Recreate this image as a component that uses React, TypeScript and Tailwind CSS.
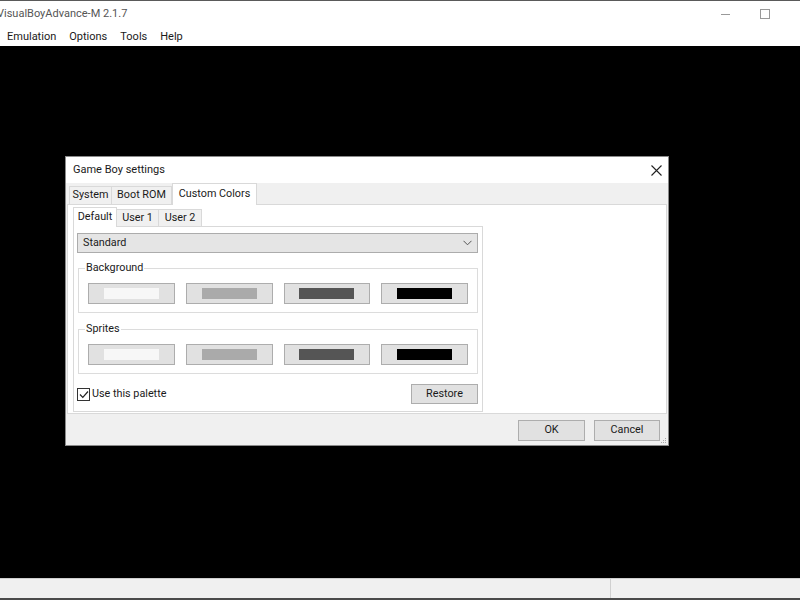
import React from "react";

const font = { fontFamily: 'Roboto, "Noto Sans", sans-serif' };

function ColorButton({ color }: { color: string }) {
  return (
    <div className="h-[21px] bg-[#e1e1e1] border border-[#adadad] flex items-center justify-center">
      <div className="w-[55px] h-[11px]" style={{ backgroundColor: color }} />
    </div>
  );
}

function Group({ label, colors }: { label: string; colors: string[] }) {
  return (
    <div className="relative border border-[#dcdcdc] h-[45px] ml-[1px] pt-[14px] px-[9px]">
      <span className="absolute -top-[9px] left-[6px] bg-white px-[1px] text-[10.8px] leading-[16px] text-[#1a1a1a]">
        {label}
      </span>
      <div className="grid grid-cols-4 gap-x-[11px]">
        {colors.map((c, i) => (
          <ColorButton key={i} color={c} />
        ))}
      </div>
    </div>
  );
}

export default function App() {
  const colors = ["#f7f7f7", "#aaaaaa", "#555555", "#000000"];
  return (
    <div className="w-[800px] h-[600px] flex flex-col bg-black overflow-hidden text-[10.8px] text-[#1a1a1a]" style={font}>
      {/* top strip */}
      <div className="h-[1px] bg-[#5a5a5a] shrink-0" />
      {/* title bar */}
      <div className="h-[25px] bg-white flex items-center shrink-0 relative pt-[2px]">
        <span className="-ml-[3px] text-[11px] text-[#555]">VisualBoyAdvance-M 2.1.7</span>
        <div className="ml-auto flex items-center h-full mr-[30px]">
          <div className="w-[9px] h-[1px] bg-[#999]" />
          <div className="w-[10px] h-[10px] border border-[#999] ml-[30px] -mt-[2px]" />
        </div>
      </div>
      {/* menu bar */}
      <div className="h-[20px] bg-white flex items-center shrink-0 pl-[7px] gap-[13px] text-[11px] text-[#1a1a1a] pt-[3px]">
        <span>Emulation</span>
        <span>Options</span>
        <span>Tools</span>
        <span>Help</span>
      </div>
      {/* black area */}
      <div className="flex-1 bg-black pt-[110px] pl-[65px]">
        <div className="w-[604px] h-[290px] bg-[#f0f0f0] border border-[#8a8a8a] flex flex-col">
          {/* dialog title */}
          <div className="h-[26px] bg-white flex items-center pl-[7px] shrink-0 pt-[1px]">
            <span className="text-[11px]">Game Boy settings</span>
            <span className="ml-auto mr-[6px] w-[12px] h-[12px] flex items-center justify-center">
              <svg width="11" height="11" viewBox="0 0 11 11">
                <path d="M0.5 0.5 L10.5 10.5 M10.5 0.5 L0.5 10.5" stroke="#222" strokeWidth="1.1" />
              </svg>
            </span>
          </div>
          {/* tabs */}
          <div className="h-[21px] flex items-end pl-[3px] shrink-0 relative z-10">
            <div className="w-[43px] h-[18px] border border-b-0 border-[#d9d9d9] flex items-center justify-center">System</div>
            <div className="w-[60px] h-[18px] border border-b-0 border-l-0 border-[#d9d9d9] flex items-center justify-center">Boot ROM</div>
            <div className="w-[85px] h-[22px] -mb-[1px] border border-b-0 border-[#d9d9d9] bg-white flex items-start pt-[2px] justify-center">Custom Colors</div>
          </div>
          {/* panel */}
          <div className="mx-[1px] h-[210px] bg-white border border-[#d9d9d9] pt-[1px] pl-[5px] shrink-0">
            <div className="h-[20px] flex items-end relative z-10">
              <div className="w-[44px] h-[20px] -mb-[1px] border border-b-0 border-[#d9d9d9] bg-white flex items-start pt-[1px] justify-center">Default</div>
              <div className="w-[42px] h-[17px] border border-b-0 border-l-0 border-[#d9d9d9] bg-[#f0f0f0] flex items-center justify-center">User 1</div>
              <div className="w-[43px] h-[17px] border border-b-0 border-l-0 border-[#d9d9d9] bg-[#f0f0f0] flex items-center justify-center">User 2</div>
            </div>
            <div className="w-[410px] h-[186px] border border-[#d9d9d9] bg-white pt-[6px] pl-[3px] pr-[4px]">
              <div className="h-[20px] bg-[#e5e5e5] border border-[#acacac] flex items-center pl-[5px] pr-[5px]">
                <span>Standard</span>
                <svg className="ml-auto" width="9" height="6" viewBox="0 0 9 6">
                  <path d="M0.5 0.8 L4.5 4.8 L8.5 0.8" stroke="#555" strokeWidth="1" fill="none" />
                </svg>
              </div>
              <div className="mt-[15px]">
                <Group label="Background" colors={colors} />
              </div>
              <div className="mt-[16px]">
                <Group label="Sprites" colors={colors} />
              </div>
              <div className="mt-[10px] flex items-center">
                <div className="w-[13px] h-[13px] border border-[#333] flex items-center justify-center">
                  <svg width="10" height="9" viewBox="0 0 10 9">
                    <path d="M1 4.5 L3.8 7.3 L9 1.5" stroke="#222" strokeWidth="1.2" fill="none" />
                  </svg>
                </div>
                <span className="ml-[2px]">Use this palette</span>
                <div className="ml-auto w-[67px] h-[20px] bg-[#e1e1e1] border border-[#adadad] flex items-center justify-center">Restore</div>
              </div>
            </div>
          </div>
          {/* bottom buttons */}
          <div className="flex-1 flex items-start justify-end pt-[6px] pr-[8px] gap-[9px] relative">
            <div className="w-[67px] h-[21px] bg-[#e1e1e1] border border-[#adadad] flex items-center justify-center">OK</div>
            <div className="w-[66px] h-[21px] bg-[#e1e1e1] border border-[#adadad] flex items-center justify-center">Cancel</div>
            <svg className="absolute right-[1px] bottom-[1px]" width="8" height="8" viewBox="0 0 8 8">
              <rect x="6" y="2" width="1" height="1" fill="#aaa" />
              <rect x="4" y="4" width="1" height="1" fill="#aaa" />
              <rect x="6" y="4" width="1" height="1" fill="#aaa" />
              <rect x="2" y="6" width="1" height="1" fill="#aaa" />
              <rect x="4" y="6" width="1" height="1" fill="#aaa" />
              <rect x="6" y="6" width="1" height="1" fill="#aaa" />
            </svg>
          </div>
        </div>
      </div>
      {/* status bar */}
      <div className="h-[20px] bg-[#f0f0f0] border-t border-[#cfcfcf] shrink-0 flex">
        <div className="w-[611px] border-r border-[#d0d0d0]" />
        <div className="flex-1" />
      </div>
      <div className="h-[2px] bg-[#4a4a4a] shrink-0" />
    </div>
  );
}
